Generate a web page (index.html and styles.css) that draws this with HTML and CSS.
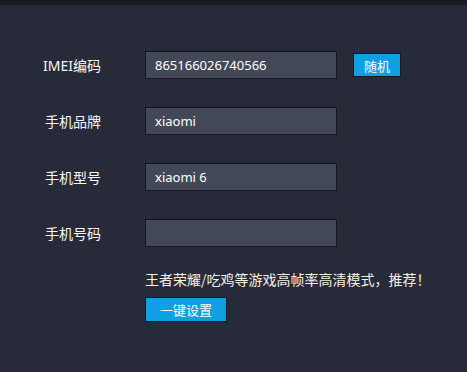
FILE: index.html
```html
<!DOCTYPE html>
<html lang="zh-CN">
<head>
    <meta charset="UTF-8">
    <meta name="viewport" content="width=device-width, initial-scale=1.0">
    <title>设备信息</title>
    <link rel="stylesheet" href="styles.css">
</head>
<body>
    <div class="top-bar"></div>

    <form class="device-form">
        <div class="form-row">
            <label class="form-label" for="imei">IMEI编码</label>
            <input type="text" id="imei" class="form-input" value="865166026740566">
            <button type="button" class="random-btn">随机</button>
        </div>

        <div class="form-row">
            <label class="form-label" for="brand">手机品牌</label>
            <input type="text" id="brand" class="form-input" value="xiaomi">
        </div>

        <div class="form-row">
            <label class="form-label" for="model">手机型号</label>
            <input type="text" id="model" class="form-input" value="xiaomi 6">
        </div>

        <div class="form-row">
            <label class="form-label" for="phone">手机号码</label>
            <input type="text" id="phone" class="form-input" value="">
        </div>

        <div class="preset-section">
            <p class="preset-hint">王者荣耀/吃鸡等游戏高帧率高清模式，推荐！</p>
            <button type="button" class="preset-btn">一键设置</button>
        </div>
    </form>
</body>
</html>
```

FILE: styles.css
```css
* {
    margin: 0;
    padding: 0;
    box-sizing: border-box;
}

body {
    font-family: "Noto Sans", "Noto Sans CJK SC", sans-serif;
    background: #272b39;
    color: #ffffff;
    min-height: 100vh;
}

.top-bar {
    height: 5px;
    background: #181b24;
}

.device-form {
    padding: 46px 0 0 30px;
}

.form-row {
    display: flex;
    align-items: center;
    height: 28px;
}

.form-row + .form-row {
    margin-top: 28px;
}

.form-label {
    width: 71px;
    margin-right: 44px;
    text-align: right;
    font-size: 14px;
    color: #f8f8f8;
}

.form-input {
    width: 192px;
    height: 28px;
    padding: 0 9px;
    background: #434859;
    border: 1px solid #15171e;
    color: #ffffff;
    font-family: "Noto Sans", "Noto Sans CJK SC", sans-serif;
    font-size: 13px;
    outline: none;
}

.random-btn {
    width: 48px;
    height: 24px;
    margin-left: 16px;
    background: #0ea0e3;
    border: 1px solid #15171e;
    color: #ffffff;
    font-family: "Noto Sans CJK SC", sans-serif;
    font-size: 13px;
    cursor: pointer;
}

.preset-section {
    margin-left: 115px;
    padding-top: 22px;
}

.preset-hint {
    font-family: "Noto Sans CJK SC", sans-serif;
    font-size: 14px;
    line-height: 20px;
    text-spacing-trim: space-all;
    color: #f6f0e2;
    margin-bottom: 8px;
}

.preset-btn {
    width: 82px;
    height: 25px;
    background: #0ea0e3;
    border: 1px solid #15171e;
    color: #ffffff;
    font-family: "Noto Sans CJK SC", sans-serif;
    font-size: 13px;
    cursor: pointer;
}
```
